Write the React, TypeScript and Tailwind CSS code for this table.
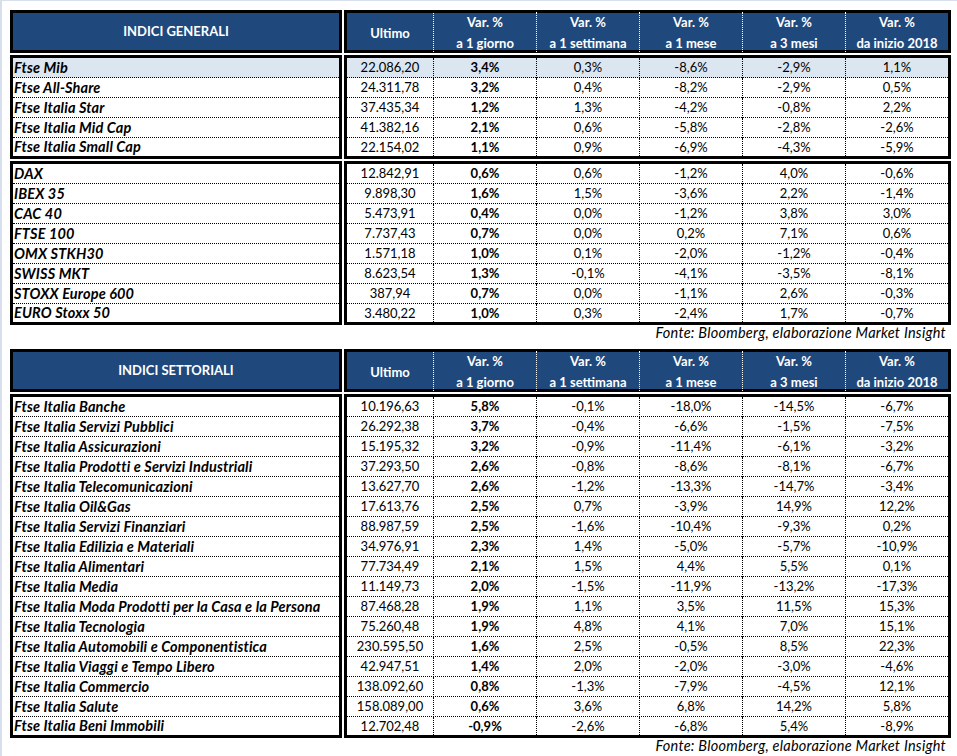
import React from 'react'

type Row = [string, string, string, string, string, string, string]

const generali1: Row[] = [
  ['Ftse Mib', '22.086,20', '3,4%', '0,3%', '-8,6%', '-2,9%', '1,1%'],
  ['Ftse All-Share', '24.311,78', '3,2%', '0,4%', '-8,2%', '-2,9%', '0,5%'],
  ['Ftse Italia Star', '37.435,34', '1,2%', '1,3%', '-4,2%', '-0,8%', '2,2%'],
  ['Ftse Italia Mid Cap', '41.382,16', '2,1%', '0,6%', '-5,8%', '-2,8%', '-2,6%'],
  ['Ftse Italia Small Cap', '22.154,02', '1,1%', '0,9%', '-6,9%', '-4,3%', '-5,9%'],
]

const generali2: Row[] = [
  ['DAX', '12.842,91', '0,6%', '0,6%', '-1,2%', '4,0%', '-0,6%'],
  ['IBEX 35', '9.898,30', '1,6%', '1,5%', '-3,6%', '2,2%', '-1,4%'],
  ['CAC 40', '5.473,91', '0,4%', '0,0%', '-1,2%', '3,8%', '3,0%'],
  ['FTSE 100', '7.737,43', '0,7%', '0,0%', '0,2%', '7,1%', '0,6%'],
  ['OMX STKH30', '1.571,18', '1,0%', '0,1%', '-2,0%', '-1,2%', '-0,4%'],
  ['SWISS MKT', '8.623,54', '1,3%', '-0,1%', '-4,1%', '-3,5%', '-8,1%'],
  ['STOXX Europe 600', '387,94', '0,7%', '0,0%', '-1,1%', '2,6%', '-0,3%'],
  ['EURO Stoxx 50', '3.480,22', '1,0%', '0,3%', '-2,4%', '1,7%', '-0,7%'],
]

const settoriali: Row[] = [
  ['Ftse Italia Banche', '10.196,63', '5,8%', '-0,1%', '-18,0%', '-14,5%', '-6,7%'],
  ['Ftse Italia Servizi Pubblici', '26.292,38', '3,7%', '-0,4%', '-6,6%', '-1,5%', '-7,5%'],
  ['Ftse Italia Assicurazioni', '15.195,32', '3,2%', '-0,9%', '-11,4%', '-6,1%', '-3,2%'],
  ['Ftse Italia Prodotti e Servizi Industriali', '37.293,50', '2,6%', '-0,8%', '-8,6%', '-8,1%', '-6,7%'],
  ['Ftse Italia Telecomunicazioni', '13.627,70', '2,6%', '-1,2%', '-13,3%', '-14,7%', '-3,4%'],
  ['Ftse Italia Oil&Gas', '17.613,76', '2,5%', '0,7%', '-3,9%', '14,9%', '12,2%'],
  ['Ftse Italia Servizi Finanziari', '88.987,59', '2,5%', '-1,6%', '-10,4%', '-9,3%', '0,2%'],
  ['Ftse Italia Edilizia e Materiali', '34.976,91', '2,3%', '1,4%', '-5,0%', '-5,7%', '-10,9%'],
  ['Ftse Italia Alimentari', '77.734,49', '2,1%', '1,5%', '4,4%', '5,5%', '0,1%'],
  ['Ftse Italia Media', '11.149,73', '2,0%', '-1,5%', '-11,9%', '-13,2%', '-17,3%'],
  ['Ftse Italia Moda Prodotti per la Casa e la Persona', '87.468,28', '1,9%', '1,1%', '3,5%', '11,5%', '15,3%'],
  ['Ftse Italia Tecnologia', '75.260,48', '1,9%', '4,8%', '4,1%', '7,0%', '15,1%'],
  ['Ftse Italia Automobili e Componentistica', '230.595,50', '1,6%', '2,5%', '-0,5%', '8,5%', '22,3%'],
  ['Ftse Italia Viaggi e Tempo Libero', '42.947,51', '1,4%', '2,0%', '-2,0%', '-3,0%', '-4,6%'],
  ['Ftse Italia Commercio', '138.092,60', '0,8%', '-1,3%', '-7,9%', '-4,5%', '12,1%'],
  ['Ftse Italia Salute', '158.089,00', '0,6%', '3,6%', '6,8%', '14,2%', '5,8%'],
  ['Ftse Italia Beni Immobili', '12.702,48', '-0,9%', '-2,6%', '-6,8%', '5,4%', '-8,9%'],
]

const varHeads = ['a 1 giorno', 'a 1 settimana', 'a 1 mese', 'a 3 mesi', 'da inizio 2018']

const cols = 'grid grid-cols-[87px_103px_103px_103px_103px_1fr]'

function Header({ title }: { title: string }) {
  return (
    <div className="flex gap-[2px] h-[43px]">
      <div className="w-[332px] border-[3px] border-black bg-[#1f497d] text-white font-bold flex items-center justify-center">
        {title}
      </div>
      <div className={`flex-1 border-[3px] border-black bg-[#1f497d] text-white font-bold ${cols}`}>
        <div className="flex items-center justify-center border-r border-dotted border-white">Ultimo</div>
        {varHeads.map((h, i) => (
          <div
            key={h}
            className={`flex flex-col items-center -mt-[1px] leading-[21px] ${i < 4 ? 'border-r border-dotted border-white' : ''}`}
          >
            <span>Var. %</span>
            <span>{h}</span>
          </div>
        ))}
      </div>
    </div>
  )
}

function Group({ rows, highlightFirst }: { rows: Row[]; highlightFirst?: boolean }) {
  return (
    <div className="flex gap-[2px]">
      {/* names */}
      <div className="w-[332px] border-[3px] border-black">
        {rows.map((r, i) => (
          <div
            key={r[0]}
            className={`flex items-center pl-[1px] font-bold italic text-[14.5px] tracking-[0.15px] whitespace-nowrap ${
              i < rows.length - 1 ? 'h-[20px] border-b border-dotted border-black' : 'h-[18px]'
            } ${highlightFirst && i === 0 ? 'bg-[#dce6f1]' : ''}`}
          >
            {r[0]}
          </div>
        ))}
      </div>

      {/* values */}
      <div className="flex-1 border-[3px] border-black">
        {rows.map((r, i) => (
          <div
            key={r[0]}
            className={`${cols} ${
              i < rows.length - 1 ? 'h-[20px] border-b border-dotted border-black' : 'h-[18px]'
            } ${highlightFirst && i === 0 ? 'bg-[#dce6f1]' : ''}`}
          >
            {r.slice(1).map((v, j) => (
              <div
                key={j}
                className={`flex items-center justify-center ${j === 1 ? 'font-bold' : ''} ${
                  j < 5 ? 'border-r border-dotted border-black' : ''
                }`}
              >
                {v}
              </div>
            ))}
          </div>
        ))}
      </div>
    </div>
  )
}

function Fonte() {
  return (
    <div className="h-[24px] leading-[16px] italic text-[14.5px] tracking-[0.25px] text-right pr-[5px]">
      Fonte: Bloomberg, elaborazione Market Insight
    </div>
  )
}

export default function App() {
  return (
    <div
      className="w-[957px] h-[756px] bg-white border-l-2 border-t border-[#d6dfeb] pl-[8px] pt-[9px] pr-[6px] text-[13px] text-black overflow-hidden"
      style={{ fontFamily: 'Lato, "Liberation Sans", sans-serif' }}
    >
      <div className="flex flex-col gap-[2px]">
        <Header title="INDICI GENERALI" />
        <Group rows={generali1} highlightFirst />
        <Group rows={generali2} />
      </div>
      <Fonte />

      <div className="flex flex-col gap-[2px]">
        <Header title="INDICI SETTORIALI" />
        <Group rows={settoriali} />
      </div>
      <Fonte />
    </div>
  )
}
